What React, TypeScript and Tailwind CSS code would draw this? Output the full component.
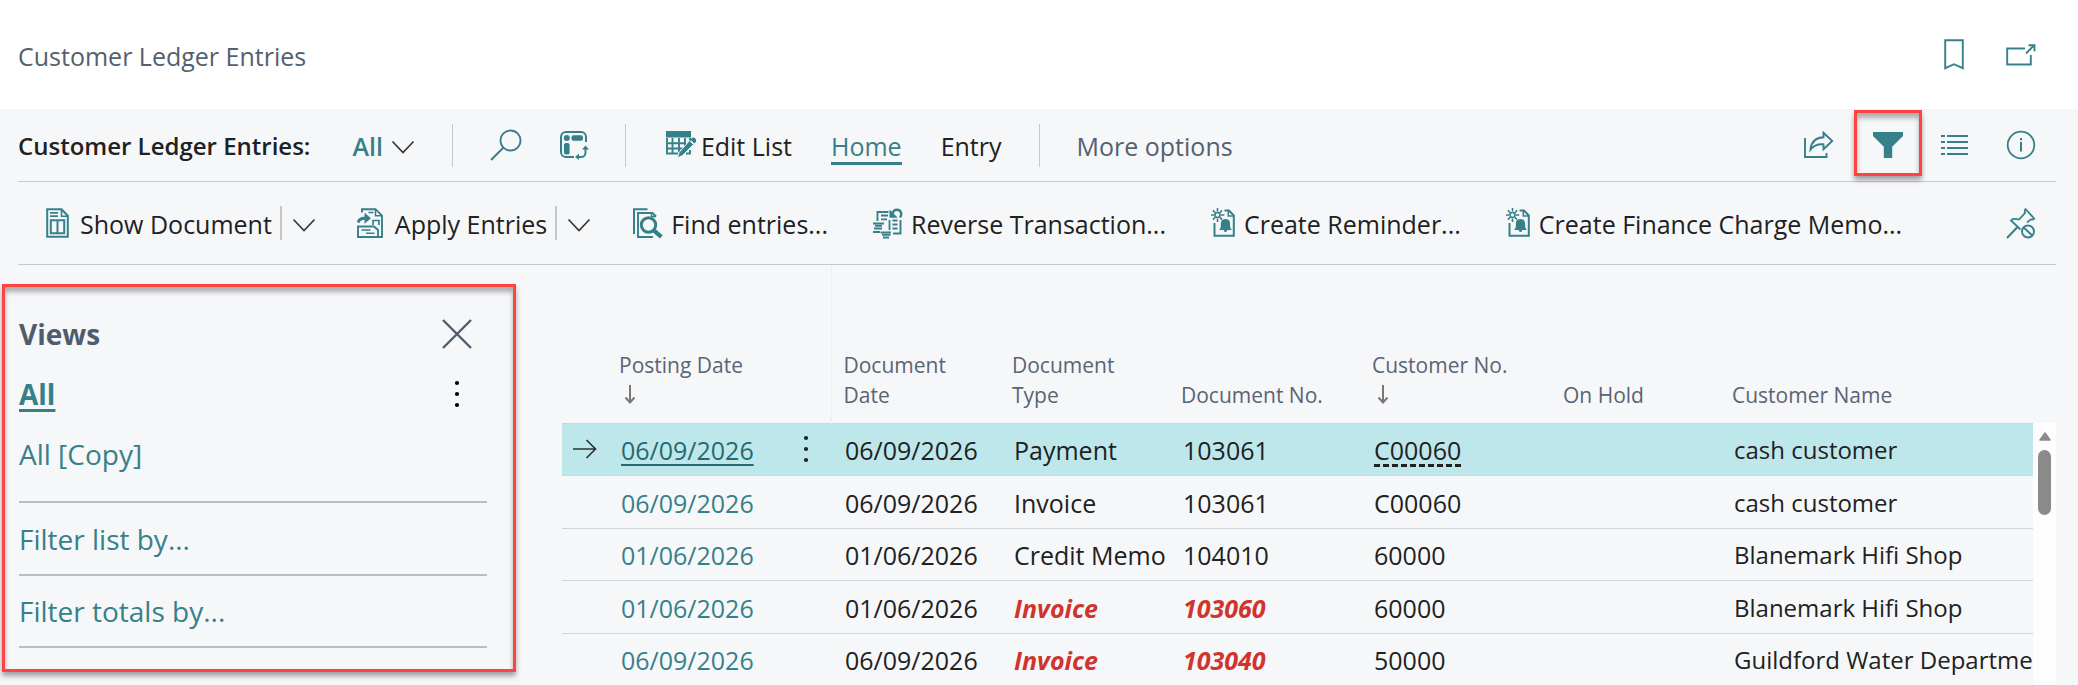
import type { ReactNode } from "react";

type IconProps = { className?: string };

const Svg = ({
  w,
  h,
  children,
  className = "",
}: {
  w: number;
  h: number;
  children: ReactNode;
  className?: string;
}) => (
  <svg
    width={w}
    height={h}
    viewBox={`0 0 ${w} ${h}`}
    fill="none"
    stroke="currentColor"
    strokeWidth={1.8}
    aria-hidden="true"
    className={`shrink-0 ${className}`}
  >
    {children}
  </svg>
);

const Chevron = () => (
  <Svg w={24} h={14} className="text-[#333333]">
    <path d="M1.5 1.5 12 12.5 22.5 1.5" strokeWidth={1.6} />
  </Svg>
);

const SearchIcon = () => (
  <Svg w={32} h={32}>
    <circle cx="20.5" cy="11.5" r="10" />
    <path d="M13.5 18.5 1 31" strokeWidth={2} />
  </Svg>
);

const AnalyzeIcon = () => (
  <Svg w={30} h={30}>
    <path d="M27 12V7a5 5 0 0 0-5-5H7a5 5 0 0 0-5 5v15a5 5 0 0 0 5 5h8" strokeWidth={2} />
    <circle cx="7.8" cy="8" r="3" fill="currentColor" stroke="none" />
    <rect x="12.5" y="5.3" width="11.5" height="5.4" rx="2" fill="currentColor" stroke="none" />
    <rect x="5" y="13" width="5.6" height="11.5" rx="2" fill="currentColor" stroke="none" />
    <path d="M26.5 18v4.500a4.500 4.500 0 0 1-4.500 4.500h-3" strokeWidth={2} />
    <path d="m26.5 15.500-3.500 4h7zM16 27l4-3.500v6.500z" fill="currentColor" stroke="none" />
  </Svg>
);

const EditListIcon = () => (
  <Svg w={30} h={28}>
    <path d="M1 7v15.500h11M6.500 7v15.500M13 7v14M19 7v8M1 12.200h19M1 17.500h16M24 7v3M24 19v3.500h-4" strokeWidth={1.9} />
    <path d="M0 0h25v6.500H0z" fill="currentColor" stroke="none" />
    <path d="m23.500 9.500 4 4-11 11-5 2.500 1.500-5.500z" fill="currentColor" stroke="#f6f7f9" strokeWidth={0.9} />
    <path d="m24.300 8.600 1-1a2.600 2.600 0 0 1 4 4l-1 1z" fill="currentColor" stroke="none" />
  </Svg>
);

const ShareIcon = () => (
  <Svg w={30} h={28}>
    <path d="M1 7v19h21.500v-4" strokeWidth={1.9} />
    <path d="M19.500 1.800 28.200 10l-8.700 8.200v-4.900c-6-.5-9.800 1.200-13 5.400.6-7.600 5.300-12 13-12.400z" strokeWidth={1.9} />
  </Svg>
);

const FilterIcon = () => (
  <Svg w={30} h={26}>
    <path d="M0 0h30v4L19.200 14.800V26h-8.400V14.800L0 4z" fill="currentColor" stroke="none" />
  </Svg>
);

const ListIcon = () => (
  <Svg w={27} h={20}>
    <path d="M0 1h4M6 1h21M0 7h4M6 7h21M0 13h4M6 13h21M0 19h4M6 19h21" />
  </Svg>
);

const InfoIcon = () => (
  <Svg w={30} h={30}>
    <circle cx="15" cy="15" r="13.3" />
    <path d="M15 12v9.500M15 8v2.200" strokeWidth={2} />
  </Svg>
);

const BookmarkIcon = () => (
  <Svg w={20} h={31}>
    <path d="M1.200 1.200h17.600v28L10 25.200l-8.800 4z" strokeWidth={1.9} />
  </Svg>
);

const PopOutIcon = () => (
  <Svg w={30} h={22}>
    <path d="M19 4.500H1.200v16h23.600V11" strokeWidth={1.9} />
    <path d="m20 9.500 8-8M22.500 1.200h6v6" strokeWidth={1.9} />
  </Svg>
);

const ShowDocumentIcon = () => (
  <Svg w={23} h={30}>
    <path d="M1.200 1.200h14.300l6.300 6.500v21.100H1.200z" strokeWidth={2} />
    <path d="M15.500 1.500v6.700h6.300" strokeWidth={1.6} />
    <path d="M4 4.800h8M4 8.200h8" strokeWidth={1.7} />
    <path d="M4.800 12.200h13.400v13H4.800zM11.500 12.200v13" strokeWidth={2} />
  </Svg>
);

const ApplyIcon = () => (
  <Svg w={27} h={30}>
    <path d="M5 4.500V1.200h13.500l6.500 6.500V29h-3" strokeWidth={1.9} />
    <path d="M18.500 1.500v6.200H25" strokeWidth={1.5} />
    <path d="M11.500 4.500h5" strokeWidth={1.5} />
    <path d="M1.200 14.500c.8-3 3-4.200 6-4.200h2" strokeWidth={3} />
    <path d="m7.500 4.800 6.500 5.500-6.500 5.500z" fill="currentColor" stroke="none" />
    <path d="M16 17v-4.500h6V17" strokeWidth={1.7} />
    <path d="M1 18.500h16l4 3.500v7H1z" strokeWidth={1.9} />
    <path d="M4.500 22h9M9 25.300h8.500" strokeWidth={1.6} />
  </Svg>
);

const FindIcon = () => (
  <Svg w={30} h={31}>
    <path d="M1 26V1.200h13.500" strokeWidth={2} />
    <path d="M23 8.500 19.500 5H5v24h15" strokeWidth={1.9} />
    <path d="M18.500 4.500v4H23" strokeWidth={1.5} />
    <circle cx="15.5" cy="17" r="7.2" strokeWidth={3} fill="#f6f7f9" />
    <path d="m20.800 22.300 7.500 6.500" strokeWidth={4.2} />
  </Svg>
);

const ReverseIcon = () => (
  <Svg w={30} h={31}>
    <path d="M4.500 13V4h11M27.500 12v13.500H20" strokeWidth={1.9} />
    <path d="M8 7.500h7M8 11.300h6M16.500 12v10M19.500 12.500h5M19.500 16.500h5M19.500 20.500h5" strokeWidth={1.8} />
    <path d="M0 15.500h11M1 20.500h8M0 24h7" strokeWidth={2.2} />
    <path d="M2 17.800h7M7.500 24.500h10.500M10 29.500h6" strokeWidth={1.9} />
    <path d="M9 26.800h8.500" strokeWidth={1.9} />
    <path d="M27 9.500c2.500-3.500 1-7.800-3-7.800-2.500 0-4 1.600-4.500 4" strokeWidth={2.4} />
    <path d="M16.500 1.500v8.300h8.300z" fill="currentColor" stroke="none" />
  </Svg>
);

const ReminderIcon = () => (
  <Svg w={25} h={30}>
    <path d="M3.500 15v12.700h19.300V7.500L18 2.500h-4.500" strokeWidth={2} />
    <path d="M17.300 3v5h5.500" strokeWidth={1.6} />
    <circle cx="6.5" cy="7" r="2.5" strokeWidth={1.6} />
    <path d="M6.500 0v3.500M6.500 10.500V14M0 7h3M10 7h3.300M1.900 2.400l2.300 2.300M8.800 9.300l2.300 2.300M11.100 2.400 8.800 4.700M4.200 9.300l-2.300 2.300" strokeWidth={1.6} />
    <path d="M14.500 11c3.600.2 4.600 1.800 4.600 5.500 0 2.200.2 3.700 1.800 5.500h-4.600c0 2.600-3.600 2.600-3.600 0H8.100c1.600-1.800 1.800-3.300 1.800-5.500 0-3.700 1-5.300 4.600-5.500z" fill="currentColor" stroke="none" />
  </Svg>
);

const UnpinIcon = () => (
  <Svg w={30} h={31}>
    <path d="m1 30 10.500-11" strokeWidth={2} />
    <path d="m14.500 21.500-9.500-9 1.500-1.300c2.500-.6 4.600-.2 6.500.3l6-6.500c-.5-1.500-.3-2.800.6-3.800l8.700 9.500c-1 1-2.200 1.200-3.700.7l-3.600 3.300" strokeWidth={1.8} />
    <circle cx="22" cy="23.5" r="6" strokeWidth={1.9} />
    <path d="m17.800 19.500 8.400 8" strokeWidth={1.9} />
  </Svg>
);

const CloseIcon = () => (
  <Svg w={30} h={30}>
    <path d="m1 1 28 28M29 1 1 29" strokeWidth={2.4} />
  </Svg>
);

const Dots = ({ className = "" }: IconProps) => (
  <Svg w={6} h={28} className={className}>
    <g fill="currentColor" stroke="none">
      <circle cx="3" cy="3" r="2.1" />
      <circle cx="3" cy="14" r="2.1" />
      <circle cx="3" cy="25" r="2.1" />
    </g>
  </Svg>
);

const SortArrow = () => (
  <Svg w={12} h={20} className="ml-[5px] text-[#777777]">
    <path d="M6 0v18M1.500 12.500 6 17.500l4.500-5" strokeWidth={2} />
  </Svg>
);

const RowArrow = () => (
  <Svg w={24} h={20} className="ml-[11px] text-[#333333]">
    <path d="M0 10h22.500M13.500 1l9 9-9 9" strokeWidth={1.7} />
  </Svg>
);

const Divider = ({ className = "" }: IconProps) => (
  <span className={`h-[43px] w-px shrink-0 bg-[#c5c8cc] ${className}`} />
);

const ActionLabel = ({ icon, label, gap = "gap-2" }: { icon: ReactNode; label: string; gap?: string }) => (
  <button type="button" className={`flex items-center whitespace-nowrap ${gap}`}>
    <span className="flex text-[#36808a]">{icon}</span>
    <span className="pt-[2px]">{label}</span>
  </button>
);

const SplitAction = ({ icon, label }: { icon: ReactNode; label: string }) => (
  <div className="flex items-center">
    <ActionLabel icon={icon} label={label} gap="gap-[11px]" />
    <span className="ml-[8px] h-[34px] w-[2px] bg-[#c6c6c6]" />
    <button type="button" aria-label={`${label} options`} className="ml-[10px] pt-[4px]">
      <Chevron />
    </button>
  </div>
);

type Entry = {
  date: string;
  docDate: string;
  type: string;
  no: string;
  customer: string;
  name: string;
  overdue?: boolean;
};

const entries: Entry[] = [
  { date: "06/09/2026", docDate: "06/09/2026", type: "Payment", no: "103061", customer: "C00060", name: "cash customer" },
  { date: "06/09/2026", docDate: "06/09/2026", type: "Invoice", no: "103061", customer: "C00060", name: "cash customer" },
  { date: "01/06/2026", docDate: "01/06/2026", type: "Credit Memo", no: "104010", customer: "60000", name: "Blanemark Hifi Shop" },
  { date: "01/06/2026", docDate: "01/06/2026", type: "Invoice", no: "103060", customer: "60000", name: "Blanemark Hifi Shop", overdue: true },
  { date: "06/09/2026", docDate: "06/09/2026", type: "Invoice", no: "103040", customer: "50000", name: "Guildford Water Department", overdue: true },
];

const highlight =
  "border-[3px] border-[#ff4343] shadow-[0_4px_5px_rgba(0,0,0,0.35),inset_0_5px_5px_rgba(0,0,0,0.3)]";

function TopBar() {
  return (
    <header className="flex h-[109px] items-center justify-between bg-white pr-[42px] pl-[18px]">
      <p className="pt-[3px] text-[#55606f]">Customer Ledger Entries</p>
      <div className="flex items-center gap-[42px] text-[#36808a]">
        <button type="button" aria-label="Bookmark">
          <BookmarkIcon />
        </button>
        <button type="button" aria-label="Open in new window">
          <PopOutIcon />
        </button>
      </div>
    </header>
  );
}

function ActionBar() {
  return (
    <nav className="mr-[22px] ml-[18px] flex h-[73px] items-center border-b border-[#c5c8ce]">
      <h1 className="pt-[2px] text-[24px] font-semibold whitespace-nowrap">Customer Ledger Entries:</h1>
      <button type="button" className="ml-[42px] flex items-center gap-2 font-semibold text-[#36808a]">
        <span className="pt-[2px]">All</span>
        <span className="pt-[4px]">
          <Chevron />
        </span>
      </button>
      <Divider className="ml-[37px]" />
      <button type="button" aria-label="Search" className="ml-[37px] text-[#36808a]">
        <SearchIcon />
      </button>
      <button type="button" aria-label="Analyze" className="ml-[37px] text-[#36808a]">
        <AnalyzeIcon />
      </button>
      <Divider className="ml-[36px]" />
      <div className="ml-[40px] flex items-center gap-[39px]">
        <ActionLabel icon={<EditListIcon />} label="Edit List" gap="gap-[5px]" />
        <a href="#home" className="mt-[5px] border-b-[3px] border-[#36808a] text-[#36808a]">
          Home
        </a>
        <a href="#entry" className="pt-[2px]">
          Entry
        </a>
      </div>
      <Divider className="mx-[37px]" />
      <button type="button" className="pt-[2px] whitespace-nowrap text-[#55606f]">
        More options
      </button>
      <div className="ml-auto flex items-center pr-[20px] text-[#36808a]">
        <button type="button" aria-label="Share">
          <ShareIcon />
        </button>
        <button
          type="button"
          aria-label="Show filter pane"
          className="relative ml-[20px] flex h-[62px] w-[68px] items-center justify-center"
        >
          <FilterIcon />
          <span className={`absolute inset-x-0 -top-[4px] bottom-0 ${highlight}`} />
        </button>
        <button type="button" aria-label="List view" className="ml-[19px]">
          <ListIcon />
        </button>
        <button type="button" aria-label="Details" className="ml-[38px]">
          <InfoIcon />
        </button>
      </div>
    </nav>
  );
}

function HomeActions() {
  return (
    <div className="mr-[22px] ml-[18px] flex h-[83px] items-center border-b border-[#c5c8ce] pr-[20px] pl-[28px]">
      <div className="flex items-center gap-[41px]">
        <SplitAction icon={<ShowDocumentIcon />} label="Show Document" />
        <SplitAction icon={<ApplyIcon />} label="Apply Entries" />
      </div>
      <div className="ml-[42px] flex items-center gap-[45px]">
        <ActionLabel icon={<FindIcon />} label="Find entries..." />
        <ActionLabel icon={<ReverseIcon />} label="Reverse Transaction..." />
        <ActionLabel icon={<ReminderIcon />} label="Create Reminder..." />
        <ActionLabel icon={<ReminderIcon />} label="Create Finance Charge Memo..." />
      </div>
      <button type="button" aria-label="Unpin action bar" className="ml-auto text-[#36808a]">
        <UnpinIcon />
      </button>
    </div>
  );
}

function FilterPane() {
  return (
    <aside
      className={`mt-[19px] ml-[2px] w-[514px] shrink-0 self-start pt-[17px] pr-[26px] pb-[21px] pl-[14px] text-[28px] text-[#36808a] ${highlight}`}
    >
      <div className="flex h-[60px] items-center justify-between pr-[15px]">
        <h2 className="font-bold text-[#505c6d]">Views</h2>
        <button type="button" aria-label="Close" className="text-[#505c6d]">
          <CloseIcon />
        </button>
      </div>
      <div className="flex h-[60px] items-center justify-between pr-[27px]">
        <a href="#all" className="font-bold underline decoration-[3px] underline-offset-4">
          All
        </a>
        <button type="button" aria-label="View options" className="text-black">
          <Dots />
        </button>
      </div>
      <div className="mb-[17px] flex h-[60px] items-center">
        <a href="#all-copy">All [Copy]</a>
      </div>
      <button type="button" className="block h-[73px] w-full border-t-2 border-[#b9bcc4] text-left">
        Filter list by...
      </button>
      <button type="button" className="block h-[74px] w-full border-y-2 border-[#b9bcc4] text-left">
        Filter totals by...
      </button>
    </aside>
  );
}

function LedgerTable() {
  const head = "pb-[13px] pl-[12px] align-bottom font-normal";
  const cell = "pt-[2px] pl-[14px]";
  return (
    <table className="w-full table-fixed border-collapse whitespace-nowrap">
      <colgroup>
        <col className="w-[45px]" />
        <col className="w-[172px]" />
        <col className="w-[52px]" />
        <col className="w-[169px]" />
        <col className="w-[169px]" />
        <col className="w-[191px]" />
        <col className="w-[191px]" />
        <col className="w-[169px]" />
        <col />
      </colgroup>
      <thead>
        <tr className="h-[158px] text-left text-[21px] leading-[30px] text-[#5a6473]">
          <td />
          <th className={head}>
            Posting Date
            <span className="flex h-[30px] items-center">
              <SortArrow />
            </span>
          </th>
          <td className="border-r border-[#eeeff2]" />
          <th className={head}>
            Document
            <br />
            Date
          </th>
          <th className={head}>
            Document
            <br />
            Type
          </th>
          <th className={head}>Document No.</th>
          <th className={head}>
            Customer No.
            <span className="flex h-[30px] items-center">
              <SortArrow />
            </span>
          </th>
          <th className={head}>On Hold</th>
          <th className={head}>Customer Name</th>
        </tr>
      </thead>
      <tbody>
        {entries.map((e, i) => {
          const selected = i === 0;
          const flagged = e.overdue ? "font-bold text-[#d0342c] italic" : "";
          return (
            <tr
              key={i}
              className={`border-t border-[#d2d4d9] odd:h-[52px] even:h-[53px] ${selected ? "bg-[#bee7ec]" : ""}`}
            >
              <td>{selected && <RowArrow />}</td>
              <td className={cell}>
                <a
                  href="#entry"
                  className={
                    selected
                      ? "text-[#256a70] underline decoration-2 underline-offset-4"
                      : "text-[#36808a]"
                  }
                >
                  {e.date}
                </a>
              </td>
              <td className="pl-[24px]">{selected && <Dots />}</td>
              <td className={cell}>{e.docDate}</td>
              <td className={`${cell} ${flagged}`}>{e.type}</td>
              <td className={`${cell} ${flagged}`}>{e.no}</td>
              <td className={cell}>
                <span className={selected ? "underline decoration-[3px] decoration-dashed underline-offset-4" : ""}>
                  {e.customer}
                </span>
              </td>
              <td />
              <td className={`overflow-hidden ${cell} text-[24px]`}>{e.name}</td>
            </tr>
          );
        })}
      </tbody>
    </table>
  );
}

function ScrollTrack() {
  return (
    <div className="mt-[158px] flex w-[23px] shrink-0 flex-col items-center bg-[#fdfdfd] pt-[9px]">
      <Svg w={12} h={9} className="text-[#8a8a8a]">
        <path d="M6 1 11 8H1z" fill="currentColor" strokeWidth={1.5} strokeLinejoin="round" />
      </Svg>
      <span className="mt-[9px] h-[65px] w-[13px] rounded-full bg-[#8a8a8a]" />
    </div>
  );
}

export default function App() {
  return (
    <div className="min-h-screen overflow-hidden bg-[#f6f7f9] font-['Open_Sans',sans-serif] text-[25px] leading-[32px] text-[#212121]">
      <TopBar />
      <ActionBar />
      <HomeActions />
      <main className="flex pr-[22px]">
        <FilterPane />
        <section className="ml-[46px] min-w-0 flex-1">
          <LedgerTable />
        </section>
        <ScrollTrack />
      </main>
    </div>
  );
}
